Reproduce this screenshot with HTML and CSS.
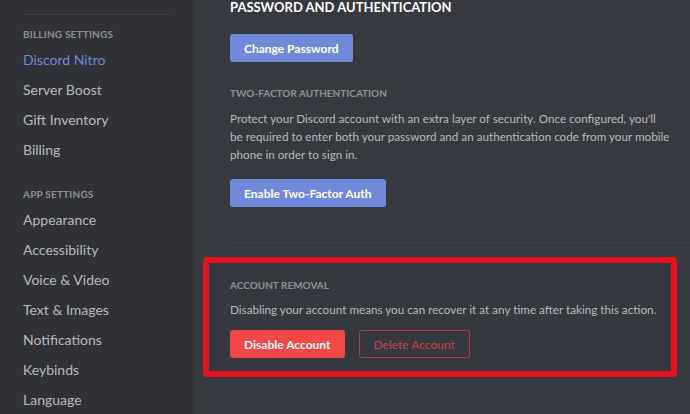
FILE: index.html
```html
<!DOCTYPE html>
<html>
<head>
<meta charset="utf-8">
<link rel="stylesheet" href="styles.css">
</head>
<body>
<div class="app">
  <nav class="sidebar">
    <div class="sep"></div>
    <div class="group-title">Billing Settings</div>
    <div class="item active">Discord Nitro</div>
    <div class="item">Server Boost</div>
    <div class="item">Gift Inventory</div>
    <div class="item">Billing</div>
    <div class="group-title second">App Settings</div>
    <div class="item">Appearance</div>
    <div class="item">Accessibility</div>
    <div class="item">Voice &amp; Video</div>
    <div class="item">Text &amp; Images</div>
    <div class="item">Notifications</div>
    <div class="item">Keybinds</div>
    <div class="item">Language</div>
  </nav>
  <main class="content">
    <h2 class="section-title">Password and Authentication</h2>
    <button class="btn primary change">Change Password</button>
    <h3 class="sub-title">Two-Factor Authentication</h3>
    <p class="desc">Protect your Discord account with an extra layer of security. Once configured, you'll<br>be required to enter both your password and an authentication code from your mobile phone in order to sign in.</p>
    <button class="btn primary">Enable Two-Factor Auth</button>
    <div class="divider"></div>
    <section class="removal">
      <h3 class="sub-title">Account Removal</h3>
      <p class="desc">Disabling your account means you can recover it at any time after taking this action.</p>
      <div class="actions">
        <button class="btn danger">Disable Account</button>
        <button class="btn outline">Delete Account</button>
      </div>
    </section>
  </main>
</div>
</body>
</html>
```
FILE: styles.css
```css
* { box-sizing: border-box; }
html, body { margin: 0; padding: 0; }
body {
  width: 690px;
  height: 414px;
  overflow: hidden;
  background: #36393f;
  font-family: "Lato", "Noto Sans", sans-serif;
}
.app { display: flex; height: 414px; }
.sidebar {
  width: 193px;
  flex: none;
  background: #2f3136;
  padding: 14px 21px 0 23px;
}
.sep { height: 1px; background: #3b3d43; margin-bottom: 12px; }
.group-title {
  color: #8e9297;
  font-size: 10px;
  font-weight: 700;
  text-transform: uppercase;
  letter-spacing: 0.2px;
  height: 14px;
  line-height: 14px;
  margin-bottom: 4px;
}
.group-title.second { margin-top: 22px; }
.item {
  color: #b9bbbe;
  font-size: 14px;
  height: 30px;
  line-height: 30px;
  white-space: nowrap;
}
.item.active { color: #7289da; }
.content {
  flex: 1;
  padding: 0 0 0 37px;
  display: flex;
  flex-direction: column;
  align-items: flex-start;
}
.section-title {
  margin: 0;
  color: #ffffff;
  font-size: 13px;
  font-weight: 700;
  text-transform: uppercase;
  line-height: 14px;
}
.btn {
  font-family: inherit;
  border: none;
  border-radius: 3px;
  height: 28px;
  padding: 0 14px;
  font-size: 12px;
  font-weight: 700;
  color: #fff;
  cursor: pointer;
}
.primary { background: #7289da; }
.change { margin-top: 20px; }
.sub-title {
  margin: 25px 0 0 0;
  color: #8e9297;
  font-size: 10px;
  font-weight: 700;
  text-transform: uppercase;
  line-height: 12px;
}
.desc {
  margin: 10px 0 0 0;
  color: #b9bbbe;
  font-size: 11.7px;
  line-height: 18px;
  width: 446px;
}
.content > .desc + .btn { margin-top: 16px; }
.divider {
  align-self: stretch;
  height: 1px;
  background: #3f4248;
  margin-top: 35px;
}
.removal {
  margin: 14px 0 0 -27px;
  width: 474px;
  border: 6px solid #e3121c;
  border-radius: 4px;
  padding: 16px 4px 13px 21px;
  background: #35383e;
}
.removal .sub-title { margin-top: 0; }
.removal .desc { margin-top: 9px; width: auto; white-space: nowrap; }
.actions { display: flex; gap: 14px; margin-top: 12px; }
.danger { background: #f04747; }
.outline {
  background: transparent;
  border: 1px solid #b3404a;
  color: #c9454f;
  font-weight: 400;
  padding: 0 14px;
}
```
